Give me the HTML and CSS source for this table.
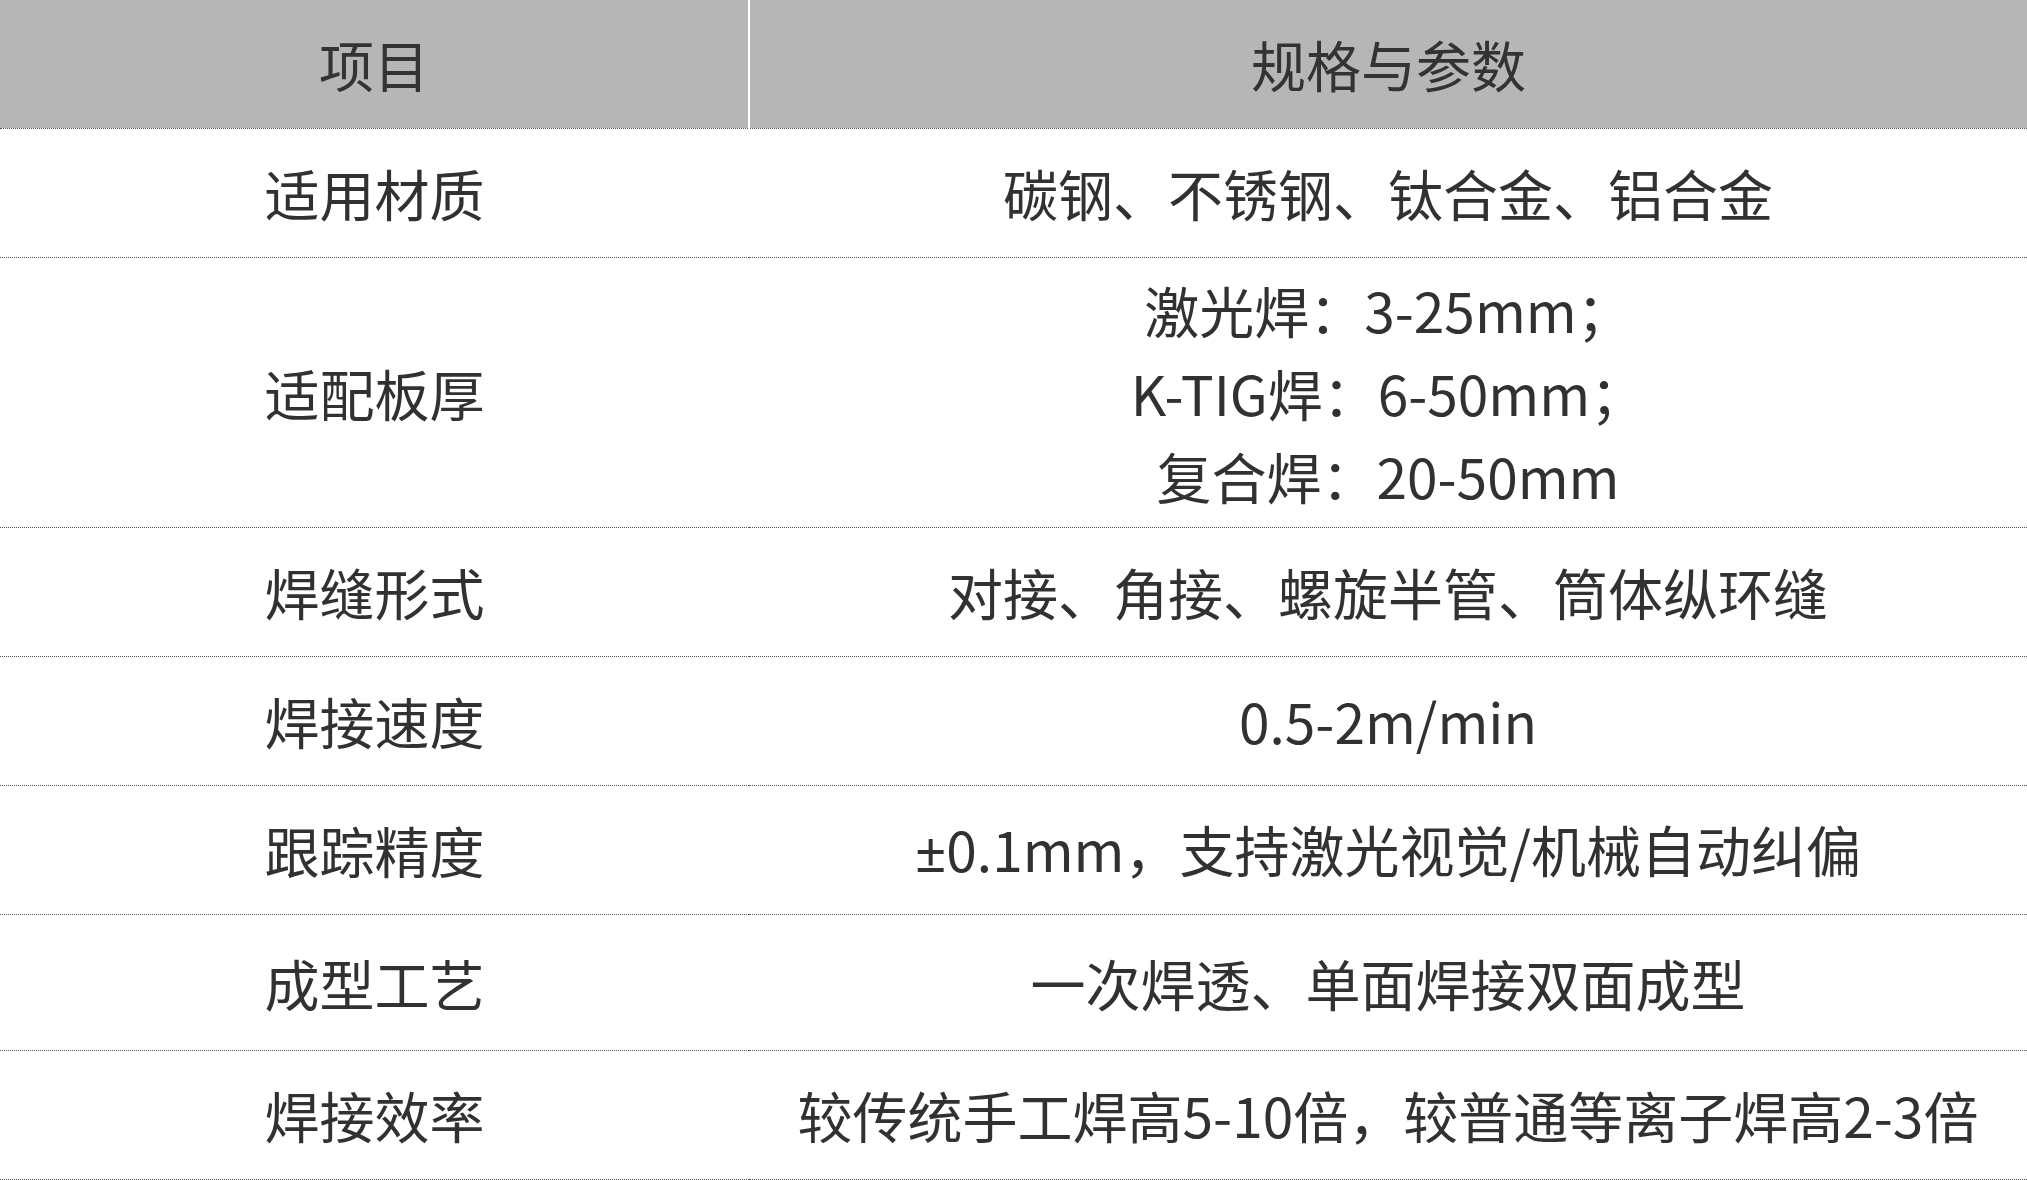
FILE: index.html
```html
<!DOCTYPE html>
<html lang="zh-CN">
<head>
<meta charset="utf-8">
<title>规格参数</title>
<link rel="stylesheet" href="styles.css">
</head>
<body>
<table class="spec">
  <colgroup>
    <col class="col-name">
    <col class="col-value">
  </colgroup>
  <thead>
    <tr class="head-row">
      <th class="head-cell head-first">项目</th>
      <th class="head-cell">规格与参数</th>
    </tr>
  </thead>
  <tbody>
    <tr class="row"><td class="cell">适用材质</td><td class="cell">碳钢、不锈钢、钛合金、铝合金</td></tr>
    <tr class="row row-multi"><td class="cell">适配板厚</td><td class="cell">激光焊：3-25mm；<br>K-TIG焊：6-50mm；<br>复合焊：20-50mm</td></tr>
    <tr class="row"><td class="cell">焊缝形式</td><td class="cell">对接、角接、螺旋半管、筒体纵环缝</td></tr>
    <tr class="row"><td class="cell">焊接速度</td><td class="cell">0.5-2m/min</td></tr>
    <tr class="row"><td class="cell">跟踪精度</td><td class="cell"><span class="latin">±</span>0.1mm，支持激光视觉/机械自动纠偏</td></tr>
    <tr class="row row-tall"><td class="cell">成型工艺</td><td class="cell">一次焊透、单面焊接双面成型</td></tr>
    <tr class="row"><td class="cell">焊接效率</td><td class="cell">较传统手工焊高5-10倍，较普通等离子焊高2-3倍</td></tr>
  </tbody>
</table>
</body>
</html>
```

FILE: styles.css
```css
html, body {
  margin: 0;
  padding: 0;
  background: #ffffff;
}

body {
  font-family: "Noto Sans CJK SC", "Noto Sans", sans-serif;
  color: #303133;
}

.spec {
  width: 2027px;
  border-collapse: collapse;
  table-layout: fixed;
}

.col-name {
  width: 749px;
}

.head-cell {
  height: 128px;
  padding: 0;
  box-sizing: border-box;
  background: #b6b6b6;
  color: #333333;
  font-size: 55px;
  font-weight: 400;
  line-height: 83px;
  text-align: center;
  vertical-align: middle;
  border-bottom: 1px dotted #555555;
}

.head-first {
  border-right: 2px solid #ffffff;
}

.cell {
  height: 129px;
  padding: 10px 0;
  box-sizing: border-box;
  font-size: 55px;
  line-height: 83px;
  text-align: center;
  vertical-align: middle;
  border-bottom: 1px dotted #555555;
}

.row-tall .cell {
  height: 136px;
}

.latin {
  font-family: "Noto Sans", sans-serif;
}
```
